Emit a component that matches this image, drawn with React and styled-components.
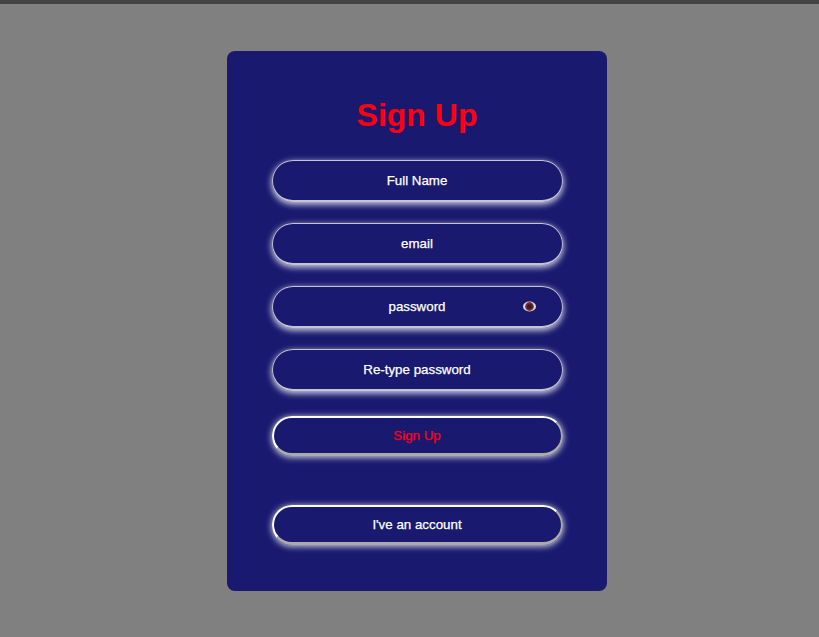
import React from 'react'
import styled, { createGlobalStyle } from 'styled-components'

const GlobalStyle = createGlobalStyle`
  html, body {
    margin: 0;
    padding: 0;
    background: #808080;
  }
  body {
    font-family: "Liberation Sans", Arial, sans-serif;
  }
`

const Page = styled.div`
  height: 637px;
  box-sizing: border-box;
  border-top: 4px solid #444444;
  padding: 47px 0 0 15px;
  display: flex;
  justify-content: center;
  align-items: flex-start;
  overflow: hidden;
`

const Card = styled.form`
  width: 380px;
  height: 540px;
  box-sizing: border-box;
  background: #191970;
  border-radius: 8px;
  padding: 46px 44px 0 45px;
  display: flex;
  flex-direction: column;
`

const Title = styled.h1`
  margin: 0 0 26px;
  padding-right: 1px;
  font-size: 32px;
  line-height: 37px;
  font-weight: 700;
  color: #ff0010;
  text-align: center;
`

const Fields = styled.div`
  display: flex;
  flex-direction: column;
  gap: 21px;
`

const Field = styled.div`
  position: relative;
  height: 42px;
`

const Input = styled.input`
  width: 100%;
  height: 100%;
  box-sizing: border-box;
  padding: 0 1px 1px 0;
  border: 1px solid #c4c4d4;
  border-bottom-width: 2px;
  border-radius: 21px;
  background: transparent;
  outline: none;
  text-align: center;
  font-family: "Liberation Sans", Arial, sans-serif;
  font-size: 13.33px;
  color: #fff;
  box-shadow: 0 2px 6px 0.5px #d0d0e0;
  &::placeholder {
    color: #fff;
    opacity: 1;
    -webkit-text-stroke: 0.25px #fff;
  }
`

const EyeButton = styled.span`
  position: absolute;
  right: 27px;
  top: 15px;
  width: 13px;
  height: 11px;
  display: flex;
`

const Button = styled.button`
  height: 40px;
  width: 100%;
  box-sizing: border-box;
  padding: 0 1px 0 0;
  border: 2px outset #fff;
  border-bottom-width: 3px;
  border-radius: 20px;
  background: transparent;
  font-family: "Liberation Sans", Arial, sans-serif;
  font-size: 13.33px;
  color: ${(p) => (p.$danger ? '#ff0010' : '#fff')};
  -webkit-text-stroke: 0.25px ${(p) => (p.$danger ? '#ff0010' : '#fff')};
  margin-top: ${(p) => p.$top}px;
  box-shadow: 0 1px 6px 0.5px #d0d0e0;
`

function Eye() {
  return (
    <svg width="13" height="11" viewBox="0 0 13 11">
      <defs>
        <radialGradient id="iris">
          <stop offset="0" stopColor="#2a1a1a" />
          <stop offset="0.45" stopColor="#3a2020" />
          <stop offset="1" stopColor="#9a3a3a" />
        </radialGradient>
      </defs>
      <ellipse cx="6.5" cy="5.5" rx="6.5" ry="5" fill="#dcd8e4" />
      <circle cx="6.5" cy="5.5" r="4.4" fill="url(#iris)" />
    </svg>
  )
}

export default function App() {
  return (
    <Page>
      <GlobalStyle />
      <Card onSubmit={(e) => e.preventDefault()}>
        <Title>Sign Up</Title>
        <Fields>
          <Field>
            <Input type="text" placeholder="Full Name" />
          </Field>
          <Field>
            <Input type="email" placeholder="email" />
          </Field>
          <Field>
            <Input type="password" placeholder="password" />
            <EyeButton>
              <Eye />
            </EyeButton>
          </Field>
          <Field>
            <Input type="password" placeholder="Re-type password" />
          </Field>
        </Fields>
        <Button type="submit" $danger $top={25}>Sign Up</Button>
        <Button type="button" $top={49}>I've an account</Button>
      </Card>
    </Page>
  )
}
